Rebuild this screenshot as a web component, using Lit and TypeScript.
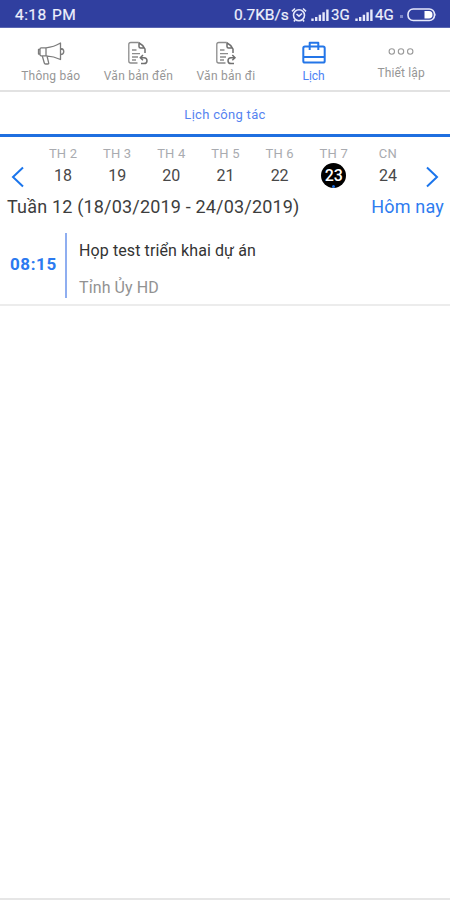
import { LitElement, html, css, svg } from "lit";
import { customElement, property } from "lit/decorators.js";
import { classMap } from "lit/directives/class-map.js";

const signal = html`<svg class="signal" width="18" height="12" viewBox="0 0 18 12" fill="#e6e9fb">
  <path d="M0.300 9.500h2.400v2.500h-2.400zM4 8h2.400v4h-2.400zM7.700 5.800h2.400v6.200h-2.400zM11.400 3.200h2.400v8.800h-2.400zM15.200 0.500h2.400v11.500h-2.400z"/>
</svg>`;

const documentBase = svg`<path d="M11.500 1.500H3.800Q1.800 1.500 1.800 3.500V20Q1.800 22 3.800 22H10.500M5 9H9.500M5 12.700H13M5 16H11M5 19H9"/><path stroke="#6f6f6f" stroke-width="1.500" d="M11.500 1.500Q15.500 3.500 18 8V12M12 2V5.500Q12 7 13.500 7H17.500"/>`;

const icons = {
  horn: html`<svg width="28" height="24" viewBox="0 0 28 24" fill="none" stroke="#7c7c7c" stroke-width="1.300" stroke-linejoin="round" stroke-linecap="round">
    <path d="M9 6.800Q17 6 23.500 2V18.500Q17 15.200 9 14.800ZM9 6.800H4.200Q3 6.800 3 8V13.500Q3 14.800 4.200 14.800H9M3 8.500H1.500V13H3M23.500 7.500Q26.800 7.700 26.800 10.500Q26.800 13.400 23.500 13.600M5.300 15L7.300 22Q7.600 23 8.500 23H10.700Q12 23 11.700 21.900L10 15"/>
  </svg>`,
  incoming: html`<svg width="22" height="24" viewBox="0 0 22 24" fill="none" stroke="#8c8c8c" stroke-width="1.300">
    ${documentBase}<path stroke="#707070" stroke-width="1.500" d="M16 14L13.300 16.800L16 19.300M13.600 16.800H17Q20 17 20 19.700Q20 22.600 17 22.600H14"/>
  </svg>`,
  outgoing: html`<svg width="22" height="24" viewBox="0 0 22 24" fill="none" stroke="#8c8c8c" stroke-width="1.300">
    ${documentBase}<path stroke="#707070" stroke-width="1.500" d="M17.300 14L20 16.800L17.300 19.300M19.700 16.800H16Q13 17 13 19.700Q13 22.600 16 22.600H19"/>
  </svg>`,
  calendar: html`<svg width="24" height="24" viewBox="0 0 24 24" fill="none" stroke="#2476e8" stroke-width="2" stroke-linejoin="round">
    <path d="M7.700 9V1.700H16.300V9M3 5.500H21Q22.700 5.500 22.700 7V20Q22.700 21.600 21 21.600H3Q1.300 21.600 1.300 20V7Q1.300 5.500 3 5.500ZM1.300 16H22.700"/>
  </svg>`,
  more: html`<svg width="26" height="20" viewBox="0 0 26 20" fill="none" stroke="#9a9a9a" stroke-width="1.100">
    <circle cx="3.800" cy="10.500" r="2.700"/><circle cx="13" cy="10.500" r="2.700"/><circle cx="22.200" cy="10.500" r="2.700"/>
  </svg>`,
};

@customElement("status-bar")
class StatusBar extends LitElement {
  static styles = css`
    :host { display: flex; align-items: center; justify-content: space-between; height: 28px; padding: 2px 13px 0 15px; box-sizing: border-box; background: #303f9f; border-bottom: 1px solid #5a66b2; color: #eef0fc; font: 400 15.500px/20px Roboto, sans-serif; -webkit-text-stroke: 0.200px #eef0fc; }
    .clock { letter-spacing: 0.450px; word-spacing: 1px; }
    .right { display: flex; align-items: center; white-space: nowrap; }
    .speed { width: 55px; letter-spacing: -0.100px; }
    .alarm { margin: 0 4px 0 2px; }
    .net { width: 21px; margin: 0 3px 0 2px; font-size: 15px; }
    .dot { width: 3px; height: 3px; margin: 3px 4px 0 1px; background: #7d88c9; }
    svg { display: block; }
  `;
  render() {
    return html`
      <span class="clock">4:18 PM</span>
      <div class="right">
        <span class="speed">0.7KB/s</span>
        <svg class="alarm" width="16" height="16" viewBox="0 0 16 16" fill="none" stroke="#e6e9fb" stroke-width="1.600">
          <circle cx="8" cy="8.300" r="5.500"/><path d="M5.500 7L8 9.200L11 6.500M1 4.300L4 1.500M15 4.300L12 1.500M4 13L3 14.500M12 13L13 14.500"/>
        </svg>
        ${signal}<span class="net">3G</span>${signal}<span class="net">4G</span>
        <span class="dot"></span>
        <svg width="30" height="14" viewBox="0 0 30 14">
          <rect x="1" y="1" width="26.500" height="11.500" rx="5.200" fill="none" stroke="#e6e9fb" stroke-width="1.600"/>
          <path d="M17.500 3H22Q25.500 3 25.500 6.750Q25.500 10.500 22 10.500H17.500Z" fill="#fff"/><path d="M28.300 5Q29.500 6.700 28.300 8.500Z" fill="#e6e9fb"/>
        </svg>
      </div>`;
  }
}

@customElement("nav-tabs")
class NavTabs extends LitElement {
  static styles = css`
    :host { display: flex; height: 64px; padding: 0 5px 0 7px; box-sizing: border-box; border-bottom: 2px solid #e2e2e2; }
    .tab { flex: 1; display: flex; flex-direction: column; align-items: center; padding-top: 13px; color: #969696; font: 12px/16px Roboto, sans-serif; letter-spacing: 0.250px; white-space: nowrap; }
    .label { margin-top: 3px; }
    .active { color: #4b82f5; letter-spacing: 0; }
    .raised { letter-spacing: 0.150px; }
    .raised .label { margin-top: 4px; }
    svg { display: block; }
  `;
  render() {
    const tabs = [
      { icon: icons.horn, label: "Thông báo" },
      { icon: icons.incoming, label: "Văn bản đến" },
      { icon: icons.outgoing, label: "Văn bản đi" },
      { icon: icons.calendar, label: "Lịch", active: true },
      { icon: icons.more, label: "Thiết lập", raised: true },
    ];
    return tabs.map((t) => html`<div class=${classMap({ tab: true, active: !!t.active, raised: !!t.raised })}>${t.icon}<span class="label">${t.label}</span></div>`);
  }
}

@customElement("week-strip")
class WeekStrip extends LitElement {
  @property({ type: Number }) selected = 23;
  static styles = css`
    :host { display: block; font-family: Roboto, sans-serif; }
    .strip { display: flex; height: 57px; }
    .arrow { width: 35.500px; flex: none; display: flex; justify-content: center; padding-top: 29px; box-sizing: border-box; }
    .days { flex: 1; display: flex; }
    .day { flex: 1; display: flex; flex-direction: column; align-items: center; padding: 9px 0 0 1px; }
    .name { font-size: 13px; line-height: 16px; color: #a9abb0; letter-spacing: 0.200px; }
    .num { width: 25px; height: 25px; margin-top: 1px; border-radius: 50%; text-align: center; font-size: 16px; line-height: 26px; color: #484848; }
    .on { position: relative; background: #000; color: #fff; font-weight: 500; }
    .on::after { content: ""; position: absolute; left: 11px; bottom: 0; width: 3px; height: 3px; border-radius: 50%; background: #1f6fe0; }
    .summary { display: flex; justify-content: space-between; height: 25px; padding: 0 6px 0 7px; font-size: 18px; line-height: 25px; color: #3d3d3d; white-space: nowrap; }
    .range { letter-spacing: 0.180px; }
    .today { color: #2e7cf0; letter-spacing: 0.200px; }
    svg { display: block; }
  `;
  render() {
    const names = ["TH 2", "TH 3", "TH 4", "TH 5", "TH 6", "TH 7", "CN"];
    return html`
      <div class="strip">
        <div class="arrow"><svg width="14" height="22" viewBox="0 0 14 22" fill="none" stroke="#1b75ec" stroke-width="2"><path d="M12 1.500L2 11L12 20.500"/></svg></div>
        <div class="days">${names.map((n, i) => html`<div class="day"><span class="name">${n}</span><span class=${classMap({ num: true, on: 18 + i === this.selected })}>${18 + i}</span></div>`)}</div>
        <div class="arrow"><svg width="14" height="22" viewBox="0 0 14 22" fill="none" stroke="#1b75ec" stroke-width="2"><path d="M2 1.500L12 11L2 20.500"/></svg></div>
      </div>
      <div class="summary"><span class="range">Tuần 12 (18/03/2019 - 24/03/2019)</span><span class="today">Hôm nay</span></div>`;
  }
}

@customElement("app-root")
class AppRoot extends LitElement {
  static styles = css`
    :host { display: flex; flex-direction: column; height: 900px; box-sizing: border-box; background: #fff; border-bottom: 2px solid #e6e6e6; font-family: Roboto, sans-serif; overflow: hidden; }
    .section { height: 42px; border-bottom: 3px solid #1f6fe0; text-align: center; font-size: 13px; line-height: 46px; color: #5583f0; letter-spacing: 0.300px; }
    .event { display: flex; height: 85px; border-bottom: 2px solid #ececec; }
    .time { width: 65px; padding-left: 10px; box-sizing: border-box; font-size: 17px; font-weight: 700; line-height: 91px; color: #2b7af0; letter-spacing: 0.600px; }
    .rule { width: 2px; height: 65px; margin-top: 14px; background: #8faef0; }
    .body { padding: 21px 0 0 12px; font-size: 16px; line-height: 22px; }
    .title { color: #333; letter-spacing: 0.100px; }
    .place { margin-top: 15px; color: #929292; letter-spacing: 0.100px; }
  `;
  render() {
    return html`
      <status-bar></status-bar>
      <nav-tabs></nav-tabs>
      <div class="section">Lịch công tác</div>
      <week-strip></week-strip>
      <div class="event">
        <div class="time">08:15</div>
        <div class="rule"></div>
        <div class="body"><div class="title">Họp test triển khai dự án</div><div class="place">Tỉnh Ủy HD</div></div>
      </div>`;
  }
}
